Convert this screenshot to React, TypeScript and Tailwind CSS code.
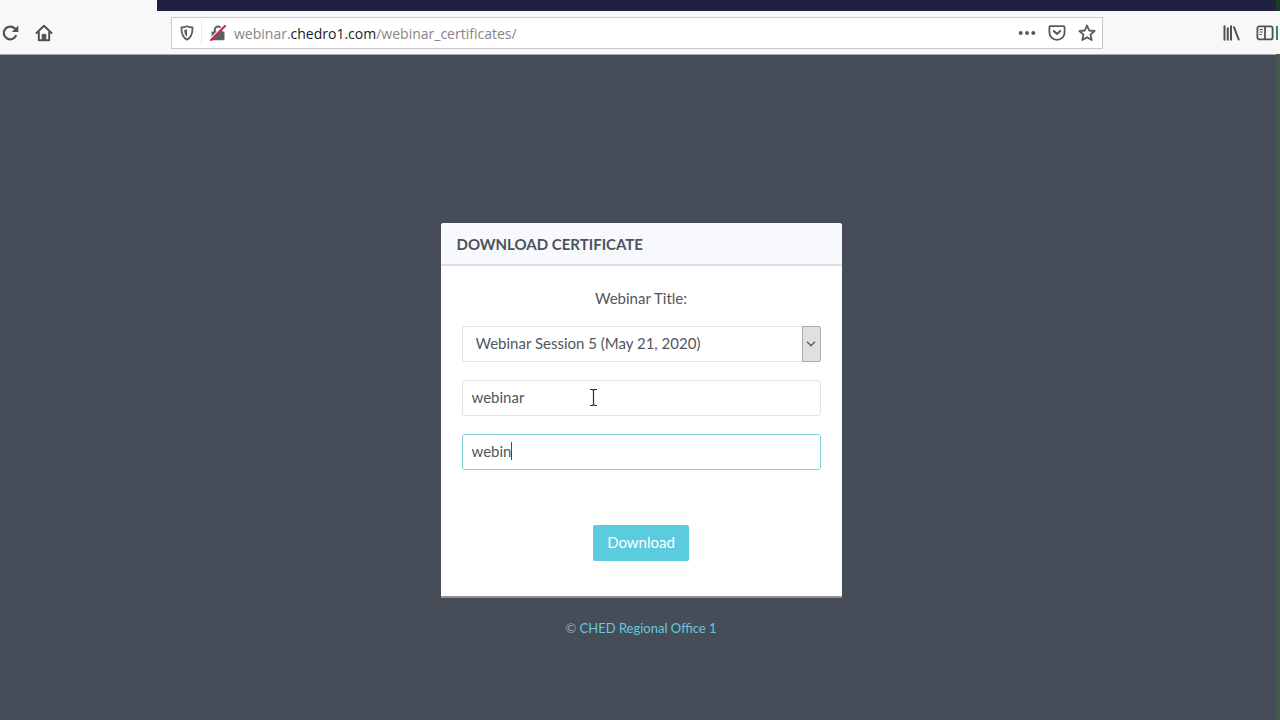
import React, { useState } from "react";

const sessions = ["Webinar Session 5 (May 21, 2020)"];

function ReloadIcon() {
  return (
    <svg width="18" height="18" viewBox="0 0 18 18" fill="none" stroke="#515154" strokeWidth="2.2">
      <path d="M15.2 11.2A6.4 6.4 0 1 1 13.9 4.6L15.4 6.2" />
      <path d="M17.3 1.500v6.500h-6.500z" fill="#515154" stroke="none" />
    </svg>
  );
}

function HomeIcon() {
  return (
    <svg width="18" height="18" viewBox="0 0 18 18" fill="none" stroke="#515154" strokeWidth="2" strokeLinecap="round" strokeLinejoin="round">
      <path d="M1.5 9 9 1.8 16.5 9" />
      <path d="M3.8 8.2v8h10.4v-8" />
      <path d="M7.2 16v-5.6h3.6V16" fill="#515154" strokeWidth="1" />
    </svg>
  );
}

function ShieldIcon() {
  return (
    <svg width="16" height="16" viewBox="0 0 16 16" fill="none" stroke="#5f5f62" strokeWidth="1.8" strokeLinejoin="round">
      <path d="M8 1.2c2 .9 3.800 1.200 5.600 1.300 0 5.500-.8 9.800-5.600 12.200C3.200 12.300 2.400 8 2.400 2.500 4.200 2.400 6 2.100 8 1.200Z" />
      <path d="M8 4.200v7.600C6 10.400 5.300 8 5.200 4.800 6.200 4.700 7.100 4.500 8 4.200Z" fill="#5f5f62" stroke="none" />
    </svg>
  );
}

function InsecureIcon() {
  return (
    <svg width="16" height="16" viewBox="0 0 16 16" fill="none">
      <path d="M4.800 7V4.600a3.200 3.200 0 0 1 6.400 0V7" stroke="#5f5f62" strokeWidth="2" />
      <rect x="1.500" y="6.500" width="13" height="8.700" rx="1.200" fill="#5f5f62" />
      <path d="M.8 14 13.800 1" stroke="#fff" strokeWidth="2.400" />
      <path d="M1 15 15 1" stroke="#dc2450" strokeWidth="2.200" strokeLinecap="round" />
    </svg>
  );
}

function DotsIcon() {
  return (
    <svg width="18" height="18" viewBox="0 0 18 18" fill="#59595c">
      <circle cx="2.700" cy="9" r="2" />
      <circle cx="9" cy="9" r="2" />
      <circle cx="15.300" cy="9" r="2" />
    </svg>
  );
}

function PocketIcon() {
  return (
    <svg width="18" height="18" viewBox="0 0 18 18" fill="none" stroke="#59595c" strokeWidth="1.800" strokeLinecap="round" strokeLinejoin="round">
      <path d="M2.400 2.200h13.200a1 1 0 0 1 1 1v5a7.600 7.600 0 0 1-15.200 0v-5a1 1 0 0 1 1-1Z" />
      <path d="M5.800 7 9 10 12.200 7" strokeWidth="2" />
    </svg>
  );
}

function StarIcon() {
  return (
    <svg width="18" height="18" viewBox="0 0 18 18" fill="none" stroke="#59595c" strokeWidth="1.800" strokeLinejoin="round">
      <path d="m9 1.500 2.200 5 5.400.500-4.100 3.600 1.200 5.400L9 13.200 4.300 16l1.200-5.400L1.400 7l5.400-.500Z" />
    </svg>
  );
}

function LibraryIcon() {
  return (
    <svg width="18" height="18" viewBox="0 0 18 18" fill="none" stroke="#515154" strokeWidth="2" strokeLinecap="round">
      <path d="M2.500 2.200v13.600M5.800 4.200v11.600M9 2.200v13.600M12 3.200l4.700 12.300" />
    </svg>
  );
}

function SidebarIcon() {
  return (
    <svg width="18" height="18" viewBox="0 0 18 18" fill="none" stroke="#515154" strokeWidth="1.800">
      <rect x="1.400" y="2.400" width="15.200" height="13" rx="2" />
      <path d="M9 2.400v13" />
      <path d="M3.500 5.500h3.300M3.500 8h3.300M3.500 10.500h2.300" strokeWidth="1.200" />
    </svg>
  );
}

function Toolbar() {
  return (
    <header className="relative border-b border-[#a5a8ad] bg-[#f8f8f9]">
      <div className="ml-[157px] h-[11px] bg-[#21203f]" />
      <div className="flex h-[43px] items-center">
        <nav aria-label="Navigation" className="flex w-[171px] items-center gap-4 pl-px">
          <button aria-label="Reload"><ReloadIcon /></button>
          <button aria-label="Home"><HomeIcon /></button>
        </nav>
        <div className="flex h-8 flex-1 items-center border border-[#c9c9cb] bg-white pr-1.5 pl-[7px]">
          <button aria-label="Tracking protection"><ShieldIcon /></button>
          <span className="mx-1.5 h-6 w-px bg-[#ededee]" />
          <button aria-label="Connection is not secure" className="ml-0.5"><InsecureIcon /></button>
          <p className="ml-2 flex-1 pt-0.5 font-['Open_Sans','Noto_Sans',sans-serif] text-sm text-[#858587]">
            webinar.<span className="text-[#1b1b1d]">chedro1.com</span>/webinar_certificates/
          </p>
          <div className="flex items-center gap-3">
            <button aria-label="Page actions"><DotsIcon /></button>
            <button aria-label="Save to Pocket"><PocketIcon /></button>
            <button aria-label="Bookmark this page"><StarIcon /></button>
          </div>
        </div>
        <div className="flex w-[177px] items-center justify-end gap-4 pr-1.5">
          <button aria-label="Library"><LibraryIcon /></button>
          <button aria-label="Sidebars"><SidebarIcon /></button>
        </div>
      </div>
      <span className="absolute right-0.5 bottom-3.5 h-3.5 w-0.5 bg-[#2e8583]" />
    </header>
  );
}

export default function App() {
  const [username, setUsername] = useState("webinar");
  const [password, setPassword] = useState("webin");
  const field = "h-9 w-full rounded-[3px] border bg-white px-[9px] text-[15px] text-[#51565f] outline-none";

  return (
    <div className="relative flex min-h-screen flex-col bg-[#464d59] font-[Lato,sans-serif] text-[15px] text-[#51565f]">
      <Toolbar />
      <main className="flex flex-1 flex-col items-center pt-[168px] pl-0.5">
        <form className="w-full max-w-[401px] rounded-t-[3px] border-b-2 border-[#8d9198] bg-white" onSubmit={(e) => e.preventDefault()}>
          <h1 className="rounded-t-[3px] border-b-2 border-[#dddfe3] bg-[#f7f9fd] px-4 pt-[11px] pb-2.5 text-[15px] leading-5 font-bold text-[#4d525d]">
            DOWNLOAD CERTIFICATE
          </h1>
          <div className="flex flex-col items-center px-[21px] pt-[22px] pb-[35px]">
            <label htmlFor="webinar-title" className="leading-5">Webinar Title:</label>
            <div className="relative mt-[18px] w-full">
              <select id="webinar-title" className="block h-9 w-full appearance-none rounded-[3px] border border-[#e0e2e5] bg-white pr-6 pb-0.5 pl-[13px] text-[15px] outline-none">
                {sessions.map((s) => <option key={s}>{s}</option>)}
              </select>
              <span className="pointer-events-none absolute inset-y-0 right-0 flex w-[19px] items-center justify-center rounded-r-[2px] border border-[#adadad] bg-[#e0e0e0]">
                <svg width="10" height="6" viewBox="0 0 10 6" fill="none" stroke="#5c5c5c" strokeWidth="1.400">
                  <path d="m1 .8 4 4 4-4" />
                </svg>
              </span>
            </div>
            <div className="relative mt-[18px] w-full">
              <input aria-label="Username" className={field + " block border-[#e0e2e5] pb-0.5"} value={username} onChange={(e) => setUsername(e.target.value)} />
              <svg className="pointer-events-none absolute top-2 left-[127px]" width="9" height="19" viewBox="0 0 9 19" fill="none" stroke="#303030" strokeWidth="1.200">
                <path d="M1 1.500h2.500l1 1 1-1H8M4.500 2.500v14M1 17.500h2.500l1-1 1 1H8" />
              </svg>
            </div>
            <div className="relative mt-[18px] w-full">
              <input aria-label="Password" className={field + " block border-[#7fd0da] pb-0.5"} value={password} onChange={(e) => setPassword(e.target.value)} />
              <span className="pointer-events-none absolute top-2 left-[49px] h-[18px] w-px bg-[#4a4a4a]" />
            </div>
            <button type="submit" className="mt-[55px] h-9 rounded-[2px] bg-[#5bcbde] px-3.5 pb-0.5 text-white">Download</button>
          </div>
        </form>
        <footer className="mt-5 text-[13px] leading-5 text-[#a0a4aa]">
          © <a href="#office" className="text-[#63c9da]">CHED Regional Office 1</a>
        </footer>
      </main>
      <div className="pointer-events-none absolute inset-y-0 right-0 w-1">
        <div className="h-[11px] bg-[#183c29]" />
      </div>
      <div className="pointer-events-none absolute top-[54px] right-0 bottom-0 w-1 bg-[#45594f]" />
    </div>
  );
}
